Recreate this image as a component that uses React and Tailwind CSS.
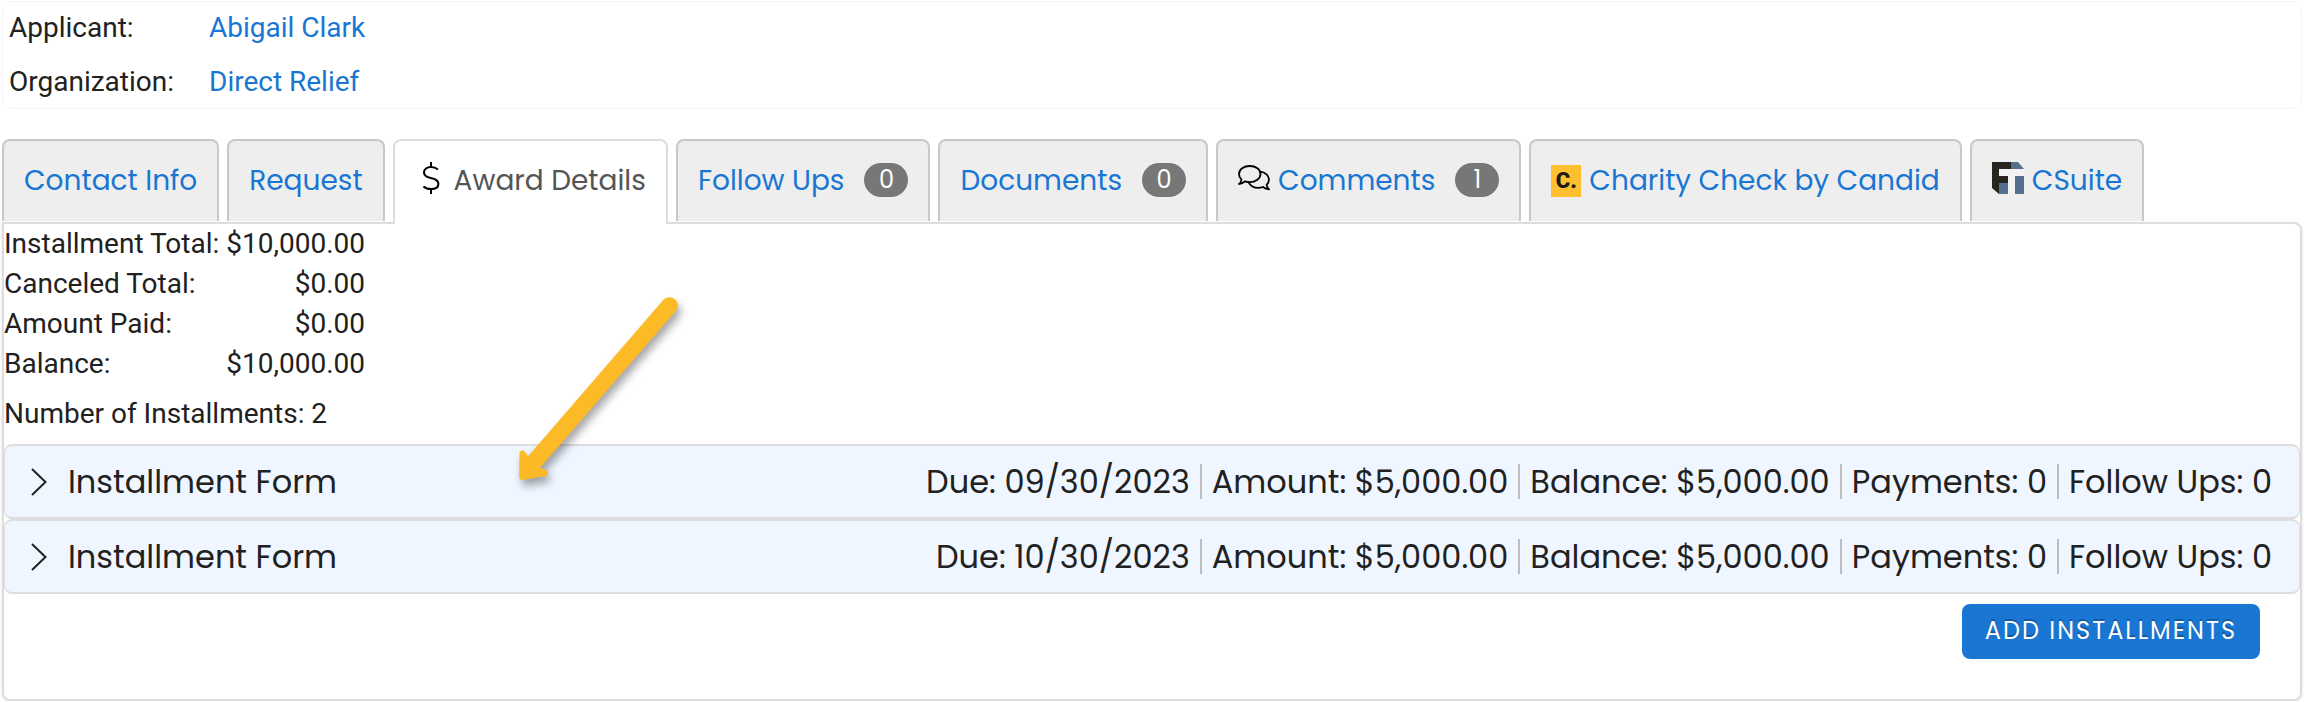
import React from 'react';

const DollarIcon = () => (
  <svg className="w-[31px] h-8 mb-1.5 shrink-0" viewBox="0 0 31 32" fill="none" stroke="#000" strokeWidth="2" aria-hidden="true">
    <path d="M16 0v5M16 27v5" />
    <path d="M23 7.6C21.2 6 18.8 5 16 5c-4.200 0-7 2.100-7 5.500 0 3.600 3 4.600 6.800 5.400 4.200.9 7.600 2 7.600 5.800 0 3.500-3 5.300-7.200 5.300-3.200 0-6-1-7.800-2.600" />
  </svg>
);

const CommentsIcon = () => (
  <svg
    className="w-8 h-[26px] mb-1.5 shrink-0"
    viewBox="0 0 32 26"
    fill="none"
    stroke="#000"
    strokeWidth="1.800"
    strokeLinejoin="round"
    aria-hidden="true"
  >
    <path d="M1 19c1.600-1.300 2.300-2.700 2.500-4.500C1.900 13 1 11.100 1 9c0-4.500 4.800-8 10.800-8s10.700 3.500 10.700 8-4.800 8.200-10.700 8.200c-1.700 0-3.300-.3-4.700-.9C5.100 18 3.200 18.800 1 19z" />
    <path d="M22.200 6.700C27.300 7.300 31 10.500 31 14.500c0 2-.9 3.800-2.400 5.300.3 1.700 1 3 2.400 4.600-2.200-.2-4.300-1-6-2.400-1.400.5-3 .8-4.600.8-4.400 0-8.100-2.100-9.800-5.500" />
  </svg>
);

const CandidIcon = () => (
  <span className="w-[30px] h-8 shrink-0 flex items-center justify-center bg-[#ffbf2f] text-[#1c1a12] font-['Roboto',sans-serif] font-black text-[22px] leading-8">
    C.
  </span>
);

const CSuiteIcon = () => (
  <svg className="w-8 h-8 mb-1.5 shrink-0" viewBox="0 0 32 32" aria-hidden="true">
    <path d="M7 7h25v7h-9v18h-7V14H7z" fill="#f3f3f3" />
    <path d="M0 0h19v7H7v7h9v7H7v11L0 26z" fill="#26251f" />
    <path d="M19 0h7l6 7H19zM23 14h9v18h-9zM7 21h9v11H7z" fill="#55708f" />
  </svg>
);

const Chevron = () => (
  <svg className="w-4 h-7 shrink-0" viewBox="0 0 16 28" fill="none" stroke="#212121" strokeWidth="2" aria-hidden="true">
    <path d="M1 1l13.500 13L1 27" />
  </svg>
);

const people = [
  { label: 'Applicant:', name: 'Abigail Clark' },
  { label: 'Organization:', name: 'Direct Relief' },
];

const tabs = [
  { label: 'Contact Info' },
  { label: 'Request' },
  { label: 'Award Details', icon: <DollarIcon />, active: true },
  { label: 'Follow Ups', count: 0 },
  { label: 'Documents', count: 0 },
  { label: 'Comments', icon: <CommentsIcon />, count: 1 },
  { label: 'Charity Check by Candid', icon: <CandidIcon /> },
  { label: 'CSuite', icon: <CSuiteIcon /> },
];

const totals = [
  ['Installment Total:', '$10,000.00'],
  ['Canceled Total:', '$0.00'],
  ['Amount Paid:', '$0.00'],
  ['Balance:', '$10,000.00'],
];

const installments = [
  ['Due: 09/30/2023', 'Amount: $5,000.00', 'Balance: $5,000.00', 'Payments: 0', 'Follow Ups: 0'],
  ['Due: 10/30/2023', 'Amount: $5,000.00', 'Balance: $5,000.00', 'Payments: 0', 'Follow Ups: 0'],
];

const Tab = ({ label, icon, count, active }) => (
  <button
    type="button"
    role="tab"
    aria-selected={Boolean(active)}
    className={
      active
        ? 'relative z-10 h-[85px] -mb-0.5 pb-[3px] px-5 flex items-center gap-2 whitespace-nowrap rounded-t-lg border-2 border-b-0 border-[#ddd] bg-white text-[#555]'
        : 'h-[82px] mb-px px-5 flex items-center gap-2 whitespace-nowrap rounded-t-lg border-2 border-b-0 border-[#c8c8c8] bg-[#eee] text-[#1976d2]'
    }
  >
    {icon}
    <span>{label}</span>
    {count !== undefined && (
      <span className="ml-3 mb-0.5 min-w-11 h-[34px] px-3 rounded-full bg-[#777] text-white text-2xl leading-[34px] text-center">
        {count}
      </span>
    )}
  </button>
);

const InstallmentRow = ({ details }) => (
  <button
    type="button"
    aria-expanded="false"
    className="w-full h-[75px] pl-[26px] pr-[27px] flex items-center border-y-2 border-x border-[#ddd] rounded-lg bg-[#eff6ff] font-['Poppins','Inter',sans-serif] text-[32px] whitespace-nowrap"
  >
    <Chevron />
    <span className="ml-[21px]">Installment Form</span>
    <span className="ml-auto flex items-center gap-2.5">
      {details.map((detail, i) => (
        <React.Fragment key={detail}>
          {i > 0 && <span className="w-0.5 h-[35px] bg-[#bdbdbd]" />}
          <span>{detail}</span>
        </React.Fragment>
      ))}
    </span>
  </button>
);

export default function App() {
  return (
    <div className="relative px-0.5 pt-px bg-white text-[#212121] font-['Roboto',sans-serif] text-[28px] leading-10">
      {/* Applicant header */}
      <dl className="p-1.5 flex flex-col gap-3.5 rounded-lg border border-[#f6f6f6]">
        {people.map(({ label, name }) => (
          <div key={label} className="flex items-center">
            <dt className="w-[200px]">{label}</dt>
            <dd>
              <a href="#" className="text-[#1976d2]">{name}</a>
            </dd>
          </div>
        ))}
      </dl>

      {/* Tabs */}
      <div role="tablist" className="mt-[30px] flex items-start gap-2 font-['Poppins','Inter',sans-serif]">
        {tabs.map((tab) => (
          <Tab key={tab.label} {...tab} />
        ))}
      </div>

      {/* Award details panel */}
      <div role="tabpanel" className="rounded-b-lg rounded-tr-lg border-2 border-[#ddd] pb-10 shadow-sm">
        <table>
          <tbody>
            {totals.map(([label, value]) => (
              <tr key={label}>
                <td className="p-0 pr-[7px]">{label}</td>
                <td className="p-0 text-right">{value}</td>
              </tr>
            ))}
          </tbody>
        </table>
        <p className="my-2.5">Number of Installments: 2</p>

        {installments.map((details) => (
          <InstallmentRow key={details[0]} details={details} />
        ))}

        <div className="mt-2.5 mr-10 flex justify-end">
          <button
            type="button"
            className="h-[55px] px-[23px] pb-0.5 rounded-lg bg-[#1976d2] text-white font-['Poppins','Inter',sans-serif] text-2xl tracking-[2px] [text-shadow:0_-2px_0_rgba(0,0,0,0.25)]"
          >
            ADD INSTALLMENTS
          </button>
        </div>
      </div>

      {/* Pointer arrow */}
      <svg
        className="absolute left-[500px] top-[285px] w-[200px] h-[220px] pointer-events-none drop-shadow-[3px_6px_4px_rgba(0,0,0,0.35)]"
        viewBox="0 0 200 220"
        fill="#fbba26"
        stroke="#fbba26"
        strokeLinecap="round"
        strokeLinejoin="round"
        aria-hidden="true"
      >
        <path d="M169.500 20.500L35 176" strokeWidth="16.500" />
        <path d="M22.500 168.500L29 178l9 7 7 3-22.800 4z" strokeWidth="6" />
      </svg>
    </div>
  );
}
